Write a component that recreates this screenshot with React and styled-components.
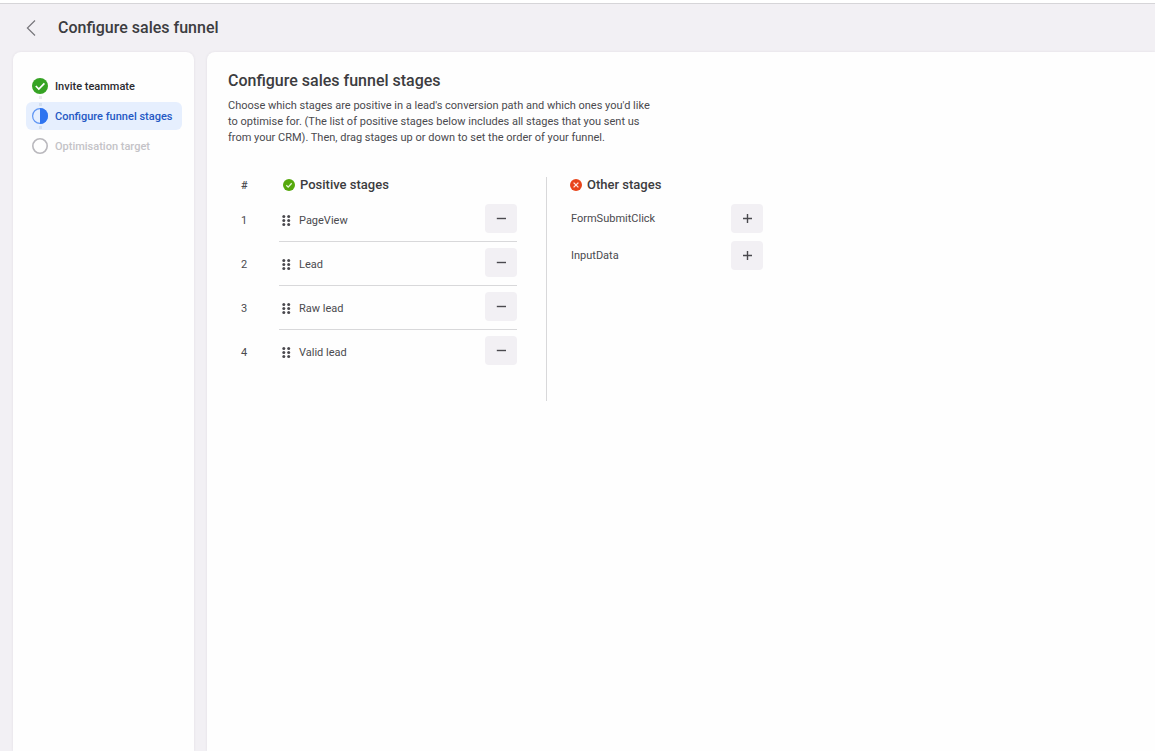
import React from "react";
import styled, { createGlobalStyle, css } from "styled-components";

const GlobalStyle = createGlobalStyle`
  *, *::before, *::after { box-sizing: border-box; }
  body {
    margin: 0;
    background: #f2f0f4;
    color: #4a4a4e;
    font-family: Roboto, "Liberation Sans", sans-serif;
    font-size: 11px;
    line-height: 16px;
  }
  h1, h2, h3, p, ol, ul { margin: 0; padding: 0; }
  ol, ul { list-style: none; }
  button { font: inherit; color: inherit; border: 0; padding: 0; cursor: pointer; }
  svg { display: block; flex: none; }
`;

const Page = styled.div`
  display: flex;
  flex-direction: column;
  min-height: 100vh;
`;

const TopEdge = styled.div`
  height: 4px;
  background: #ffffff;
  border-bottom: 1px solid #d6d5d8;
`;

const Header = styled.header`
  display: flex;
  align-items: center;
  gap: 16px;
  height: 48px;
  padding-left: 20px;
`;

const BackButton = styled.button`
  display: grid;
  place-items: center;
  width: 22px;
  height: 24px;
  background: none;
`;

const Title = styled.h1`
  color: #3c3c40;
  font-size: 16px;
  font-weight: 500;
  line-height: 20px;
`;

const Body = styled.div`
  display: flex;
  flex: 1;
  gap: 13px;
  padding-left: 13px;
`;

const panel = css`
  background: #fefefe;
  box-shadow: 0 0 3px rgba(40, 30, 60, 0.08);
`;

const Sidebar = styled.nav`
  ${panel}
  flex: none;
  width: 181px;
  padding: 20px 12px 0 13px;
  border-radius: 8px 8px 0 0;
`;

const Steps = styled.ol`
  display: grid;
  gap: 2px;
`;

const stepColors = { done: "#2b2b30", current: "#2559c4", next: "#c4c3c7" };

const Step = styled.a`
  display: flex;
  align-items: center;
  gap: 6px;
  height: 28px;
  padding-left: 5px;
  border-radius: 6px;
  background: ${(p) => (p.$state === "current" ? "#e6effe" : "none")};
  color: ${(p) => stepColors[p.$state]};
  font-weight: 500;
  text-decoration: none;
  white-space: nowrap;
`;

const StepLabel = styled.span`
  padding-top: 2px;
`;

const Main = styled.main`
  ${panel}
  flex: 1;
  min-width: 0;
  padding: 19px 21px 24px;
  border-radius: 8px 0 0 0;
`;

const Intro = styled.p`
  max-width: 430px;
  margin-top: 7px;
`;

const Columns = styled.div`
  display: flex;
  margin-top: 31px;
`;

const PositiveColumn = styled.section`
  width: 319px;
  min-height: 224px;
  padding-right: 29px;
  border-right: 1px solid #d8d8da;
`;

const OtherColumn = styled.section`
  width: 216px;
  margin-left: 23px;
`;

const ColumnHeader = styled.div`
  display: flex;
  align-items: center;
  height: 16px;
`;

const NumberCell = styled.span`
  flex: none;
  width: 51px;
  padding: 2px 0 0 13px;
  font-weight: ${(p) => (p.$head ? 500 : 400)};
`;

const ColumnTitle = styled.h3`
  display: flex;
  align-items: center;
  gap: 5px;
  padding-left: ${(p) => p.$inset || 0}px;
  color: #3c3c40;
  font-size: 13px;
  font-weight: 500;
`;

const PositiveList = styled.ol`
  margin-top: 5px;
`;

const PositiveRow = styled.li`
  display: flex;
  align-items: center;
  height: 44px;
`;

const StageCell = styled.div`
  display: flex;
  flex: 1;
  align-items: center;
  align-self: stretch;
  gap: 8px;
  padding: 2px 0 0 2px;
  border-bottom: 1px solid #d8d8da;
  ${PositiveRow}:last-child & { border-bottom-color: transparent; }
`;

const StageName = styled.span`
  flex: 1;
`;

const IconButton = styled.button`
  display: grid;
  place-items: center;
  flex: none;
  width: 32px;
  height: 29px;
  border-radius: 4px;
  background: #f2f0f4;
  ${StageCell} & {
    align-self: flex-start;
    margin-top: 4px;
  }
`;

const OtherList = styled.ul`
  display: grid;
  gap: 8px;
  margin-top: 11px;
  padding-left: 1px;
`;

const OtherRow = styled.li`
  display: flex;
  align-items: center;
  width: 192px;
`;

function BackIcon() {
  return (
    <svg width="10" height="16" viewBox="0 0 10 16" fill="none" stroke="#77767b" strokeWidth="1.2" aria-hidden="true">
      <path d="M9 .5 1.4 8 9 15.5" />
    </svg>
  );
}

function StepIcon({ state }) {
  return (
    <svg width="18" height="28" viewBox="0 0 18 28" fill="none" aria-hidden="true">
      {state === "current" && (
        <path d="M8 1h3v3H8zM8 24h3v3H8z" fill="#d3dff0" />
      )}
      {state === "done" && <path d="M8 24h3v3H8z" fill="#ebebee" />}
      {state === "done" && (
        <>
          <circle cx="9" cy="14" r="8" fill="#36a324" />
          <path d="m4.8 14 3 3 5.6-5.6" stroke="#fff" strokeWidth="1.7" />
        </>
      )}
      {state === "current" && (
        <>
          <circle cx="9" cy="14" r="7.4" fill="#e6effe" stroke="#5e95f4" strokeWidth="1.2" />
          <path d="M9 6a8 8 0 0 1 0 16z" fill="#2e74f0" />
        </>
      )}
      {state === "next" && <circle cx="9" cy="14" r="7.2" stroke="#b9b8bd" strokeWidth="1.6" />}
    </svg>
  );
}

function PositiveIcon() {
  return (
    <svg width="12" height="12" viewBox="0 0 12 12" fill="none" aria-hidden="true">
      <circle cx="6" cy="6" r="6" fill="#55a80c" />
      <path d="m3.3 6.2 1.9 1.9 3.5-3.8" stroke="#e9f7dc" strokeWidth="1.3" />
    </svg>
  );
}

function OtherIcon() {
  return (
    <svg width="12" height="12" viewBox="0 0 12 12" fill="none" aria-hidden="true">
      <circle cx="6" cy="6" r="6" fill="#e8441a" />
      <path d="m3.6 3.6 4.8 4.8m0-4.8L3.6 8.4" stroke="#ffe9e2" strokeWidth="1.3" />
    </svg>
  );
}

function DragIcon() {
  return (
    <svg width="10" height="12" viewBox="0 0 10 12" fill="#4a494e" aria-hidden="true">
      {[1.5, 5.5, 9.5].map((y) => (
        <React.Fragment key={y}>
          <circle cx="2.8" cy={y} r="1.5" />
          <circle cx="7.7" cy={y} r="1.5" />
        </React.Fragment>
      ))}
    </svg>
  );
}

function SignIcon({ plus }) {
  return (
    <svg width="10" height="11" viewBox="0 0 10 11" fill="none" stroke="#4a494e" strokeWidth="1.4" aria-hidden="true">
      <path d={plus ? "M1 5.5h9M5.5 1v9" : "M.8 5.5H10"} />
    </svg>
  );
}

const steps = [
  { label: "Invite teammate", state: "done" },
  { label: "Configure funnel stages", state: "current" },
  { label: "Optimisation target", state: "next" },
];
const positiveStages = ["PageView", "Lead", "Raw lead", "Valid lead"];
const otherStages = ["FormSubmitClick", "InputData"];

export default function App() {
  return (
    <Page>
      <GlobalStyle />
      <TopEdge />
      <Header>
        <BackButton type="button" aria-label="Back">
          <BackIcon />
        </BackButton>
        <Title>Configure sales funnel</Title>
      </Header>
      <Body>
        <Sidebar aria-label="Setup steps">
          <Steps>
            {steps.map(({ label, state }) => (
              <li key={label}>
                <Step href="#" $state={state} aria-current={state === "current" ? "step" : undefined}>
                  <StepIcon state={state} />
                  <StepLabel>{label}</StepLabel>
                </Step>
              </li>
            ))}
          </Steps>
        </Sidebar>
        <Main>
          <Title as="h2">Configure sales funnel stages</Title>
          <Intro>
            Choose which stages are positive in a lead's conversion path and which ones you'd like
            to optimise for. (The list of positive stages below includes all stages that you sent us
            from your CRM). Then, drag stages up or down to set the order of your funnel.
          </Intro>
          <Columns>
            <PositiveColumn>
              <ColumnHeader>
                <NumberCell $head>#</NumberCell>
                <ColumnTitle $inset={4}>
                  <PositiveIcon />
                  Positive stages
                </ColumnTitle>
              </ColumnHeader>
              <PositiveList>
                {positiveStages.map((name, i) => (
                  <PositiveRow key={name}>
                    <NumberCell>{i + 1}</NumberCell>
                    <StageCell>
                      <DragIcon />
                      <StageName>{name}</StageName>
                      <IconButton type="button" aria-label={`Remove ${name}`}>
                        <SignIcon />
                      </IconButton>
                    </StageCell>
                  </PositiveRow>
                ))}
              </PositiveList>
            </PositiveColumn>
            <OtherColumn>
              <ColumnHeader>
                <ColumnTitle>
                  <OtherIcon />
                  Other stages
                </ColumnTitle>
              </ColumnHeader>
              <OtherList>
                {otherStages.map((name) => (
                  <OtherRow key={name}>
                    <StageName>{name}</StageName>
                    <IconButton type="button" aria-label={`Add ${name}`}>
                      <SignIcon plus />
                    </IconButton>
                  </OtherRow>
                ))}
              </OtherList>
            </OtherColumn>
          </Columns>
        </Main>
      </Body>
    </Page>
  );
}
